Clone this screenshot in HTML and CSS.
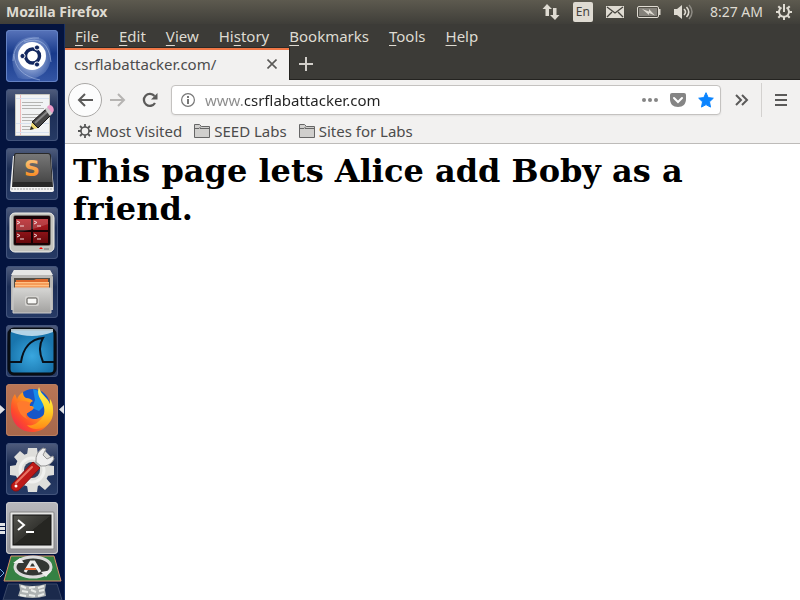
FILE: index.html
```html
<!DOCTYPE html>
<html lang="en">
<head>
<meta charset="utf-8">
<title>Mozilla Firefox</title>
<link rel="stylesheet" href="styles.css">
</head>
<body>
<header class="panel">
  <span class="panel-title">Mozilla Firefox</span>
  <div class="indicators">
    <button class="ind" aria-label="Network"><svg width="18" height="18" viewBox="0 0 18 18"><path d="M5 1l5 5H7v7H3.500V6H.5zM13 17l-5-5h3V5h3.500v7h3z"/></svg></button>
    <button class="ind lang">En</button>
    <button class="ind" aria-label="Messages"><svg width="18" height="12" viewBox="0 0 18 12"><rect width="18" height="12"/><path d="M1 1l8 6 8-6M1 11l5-5M17 11l-5-5" fill="none" stroke="#45433d" stroke-width="1.300"/></svg></button>
    <button class="ind" aria-label="Battery"><svg width="24" height="12" viewBox="0 0 24 12"><rect x=".5" y=".5" width="21" height="11" rx="1.500" fill="none" stroke="#dfdbd2"/><rect x="2" y="2" width="18" height="8" fill="#85827b"/><path d="M22 3h1.500v6H22z"/><path d="M5 3l7 2.500V3l6 6.500-6-2.500v2z"/></svg></button>
    <button class="ind" aria-label="Sound"><svg width="20" height="16" viewBox="0 0 20 16"><path d="M0 5h3l5-4v14l-5-4H0z"/><path d="M10 5q3 3 0 6M12.500 3q4.500 5 0 10" fill="none" stroke="#dfdbd2" stroke-width="1.600"/><path d="M15 1q6 7 0 14" fill="none" stroke="#8d8a83" stroke-width="1.500"/></svg></button>
    <button class="ind clock">8:27 AM</button>
    <button class="ind" aria-label="Session"><svg width="16" height="16" viewBox="0 0 16 16"><path d="M5.500 3.500a5 5 0 1 0 5 0" fill="none" stroke="#dfdbd2" stroke-width="2"/><path d="M8 0v8M2.300 2.300l2 2M13.700 2.300l-2 2M0 8h3M13 8h3M2.300 13.700l2-2M13.700 13.700l-2-2M8 13v3" stroke="#dfdbd2" stroke-width="2" fill="none"/></svg></button>
  </div>
</header>
<div class="desktop">
  <nav class="launcher" aria-label="Launcher">
    <button class="tile dash" aria-label="Search your computer"><svg viewBox="0 0 52 52">
      <defs><radialGradient id="sw" cx=".5" cy=".5" r=".6"><stop offset=".4" stop-color="#b6c7ea" stop-opacity=".75"/><stop offset="1" stop-color="#7895d0" stop-opacity=".15"/></radialGradient></defs>
      <path d="M8 40C2 20 12 5 30 7 43 9 48 23 43 36 39 46 26 52 12 48z" fill="url(#sw)"/>
      <path d="M7 31Q8 7 33 8M18 12Q42 4 45 32M8 24q1 21 26 26" fill="none" stroke="#a9bde5" stroke-opacity=".6"/>
      <circle cx="26" cy="26" r="14" fill="#fff"/>
      <circle cx="26.500" cy="26" r="7" fill="none" stroke="#12275f" stroke-width="3.400"/>
      <g fill="#12275f" stroke="#fff"><circle cx="16.500" cy="26" r="2.600"/><circle cx="31" cy="17.500" r="2.600"/><circle cx="31" cy="34.500" r="2.600"/></g>
    </svg></button>
    <button class="tile" aria-label="Text Editor"><svg viewBox="0 0 52 52">
      <path d="M9.500 5.500h34v41h-34z" fill="#f1f3f4" stroke="#c9c7be"/><path d="M14.500 6v40" stroke="#f1bcbc"/>
      <path d="M10 9.500h33M10 34.500h33M10 43.500h33" stroke="#d7e1ee"/>
      <path d="M16 13.500h21M16 16.500h19M16 19.500h22M16 25.500h20M16 28.500h17M16 31.500h12M16 37.500h8M16 40.500h8" stroke="#b4b4b2"/>
      <path d="M24 41l2-8 6 6z" fill="#ead66f"/><path d="M24 41l1-4 3 3z" fill="#222"/>
      <path d="M26 33l14-13 5 6-13 13z" fill="#454545" stroke="#171717"/><path d="M29 34l13-12" stroke="#858585" stroke-width="2"/>
      <path d="M39 20l3-2 5 6-3 3z" fill="#ccc"/><path d="M41 18q3-4 6 0 2 4-1 6z" fill="#ec9bc9"/>
    </svg></button>
    <button class="tile" aria-label="Sublime Text"><svg viewBox="0 0 52 52">
      <defs><linearGradient id="key" x2="0" y2="1"><stop stop-color="#777"/><stop offset="1" stop-color="#484848"/></linearGradient><linearGradient id="sg" x2="0" y2="1"><stop stop-color="#ffd08b"/><stop offset="1" stop-color="#f77c0b"/></linearGradient></defs>
      <path d="M7 8h38l3 34q0 2-3 2H7q-3 0-3-2z" fill="#f2f2f2"/><path d="M5 41h43" stroke="#a8a8a8" stroke-dasharray="2 1"/>
      <path d="M10 5h32q3 0 3 3l2 31H6L8 8q0-3 2-3z" fill="#292929"/><path d="M10 6h32q2 0 2 3l2 25H7L9 9q0-3 1-3z" fill="url(#key)"/>
      <text x="26" y="28" text-anchor="middle" class="sublime-s" fill="url(#sg)">S</text>
    </svg></button>
    <button class="tile" aria-label="Terminator"><svg viewBox="0 0 52 52">
      <defs><linearGradient id="red" x2="0" y2="1"><stop stop-color="#b91e24"/><stop offset="1" stop-color="#67090c"/></linearGradient></defs>
      <rect x="4" y="6" width="44" height="39" rx="5" fill="#c4c4be" stroke="#f1f1ec"/><rect x="7" y="8" width="38" height="31" rx="3" fill="#747470"/><rect x="8" y="9" width="36" height="29" rx="1" fill="#190306"/>
      <path d="M10 12h15v11H10zM27 12h15v11H27zM10 25h15v11H10zM27 25h15v11H27z" fill="url(#red)"/><path d="M10 12h32v5Q24 24 10 25z" fill="#fff" opacity=".16"/>
      <path d="M11 14l3 1.500-3 1.500M14 19h4M28 14l3 1.500-3 1.500M31 19h4M11 27l3 1.500-3 1.500M14 32h4M28 27l3 1.500-3 1.500M31 32h4" fill="none" stroke="#f3dada"/>
      <path d="M33 42l2-2 2 2z" fill="#f00"/><rect x="38" y="41" width="5" height="2" fill="#999"/>
    </svg></button>
    <button class="tile" aria-label="Files"><svg viewBox="0 0 52 52">
      <defs><linearGradient id="cab" x2="0" y2="1"><stop stop-color="#d6d6d4"/><stop offset="1" stop-color="#a2a19f"/></linearGradient></defs>
      <path d="M8 4h36l3 7v33H5V11z" fill="#b9b8b6"/><path d="M8 4h36l3 5H5z" fill="#e6e6e5"/><path d="M8 12h36v10H8z" fill="#524d45"/>
      <path d="M10 14h18l2-1h12v8H10z" fill="#df6a2c"/><path d="M9 16h34v6H9z" fill="#ffc185"/><path d="M9 18h34M9 21h34" stroke="#ec792e"/>
      <path d="M7 22h38v25H7z" fill="url(#cab)" stroke="#ccc"/><rect x="19" y="30" width="14" height="10" rx="2" fill="#d6d5d2"/><rect x="21" y="32" width="10" height="6" rx="1" fill="#f7f7f5" stroke="#53514d"/>
    </svg></button>
    <button class="tile" aria-label="Wireshark"><svg viewBox="0 0 52 52">
      <defs><radialGradient id="sea" cy=".6"><stop stop-color="#39a7df"/><stop offset="1" stop-color="#1975ad"/></radialGradient></defs>
      <rect x="3" y="4" width="46" height="45" rx="5" fill="url(#sea)" stroke="#080d13" stroke-width="3"/><path d="M5 4h42v3q-21 8-42 0z" fill="#dcecf5" opacity=".8"/>
      <path d="M4 37h11C17 24 24 14 37 13c-5 8-3 17 0 24h11" fill="none" stroke="#07101a" stroke-width="2"/>
    </svg></button>
    <button class="tile firefox" aria-label="Firefox"><svg viewBox="0 0 52 52">
      <defs><linearGradient id="fox" x1="1" x2="0" y2="1"><stop stop-color="#ffb11b"/><stop offset=".4" stop-color="#ff9a1c"/><stop offset=".7" stop-color="#ff4b2b"/><stop offset="1" stop-color="#e51b62"/></linearGradient><linearGradient id="tail" x2="0" y2="1"><stop stop-color="#fff15a"/><stop offset=".5" stop-color="#ffd928"/><stop offset="1" stop-color="#ff8a16"/></linearGradient></defs>
      <circle cx="27" cy="22" r="17" fill="#1656c8"/><path d="M27 5q12 2 14 14l-8 8-7-3 3-8z" fill="#168bea"/><path d="M16 14l9 5-3 4z" fill="#242477"/>
      <path d="M9 10l2 5c1-3 3-5 6-7 0 3 1 5 3 6 3 0 5 1 7 3-3 2-4 3-3 5 4 0 5 2 2 4l-5 3c-1 4 7 9 14 4 7-4 5-10 4-14 6 6 7 14 3 21-4 6-10 8-16 8C14 48 6 39 5 28c0-7 0-13 4-18z" fill="url(#fox)"/>
      <path d="M33 3c-3 8 2 12 4 17 3 7 1 14-5 18-3 3-8 4-11 3 3 4 9 5 15 3 8-3 12-10 11-19 0-4-1-7-3-10v5C42 13 35 12 33 3z" fill="url(#tail)"/>
      <path d="M11 19q5-4 14 0-3 2-1 4 4 0 2 3l-6 4q-1 3 3 6-11-4-12-17z" fill="#ff7a2d"/>
    </svg></button>
    <button class="tile" aria-label="System Settings"><svg viewBox="0 0 52 52">
      <g fill="#dededb"><circle cx="26" cy="27" r="17"/><path d="M22 5h9l1 7H21zM22 49h9l1-7H21zM4 23v9l7 1V22zM48 23v9l-7 1V22zM8 14l6-6 6 5-7 7zM39 47l6-6-5-6-7 7zM8 40l6 6 6-5-7-7zM45 14l-6-6-5 5 6 7z"/></g>
      <circle cx="26" cy="27" r="12" fill="none" stroke="#f0f0ee" stroke-width="3"/><circle cx="26" cy="27" r="8" fill="#34415f"/>
      <path d="M30 18l5 5-4 4-5-5z" fill="#aaa"/><path d="M30 19q-1-9 7-14l3 1-3 6 4 4 6-3 1 3q-4 8-13 7z" fill="#eee" stroke="#969696"/>
      <path d="M6 41L27 19l7 6-21 22c-4 3-10-1-7-6z" fill="#be1a18" stroke="#8a0e10"/><path d="M10 40l16-16" stroke="#e97364" stroke-width="2" stroke-linecap="round"/><circle cx="10" cy="43" r="1.500" fill="#fff"/>
    </svg></button>
    <button class="tile terminal" aria-label="Terminal"><svg viewBox="0 0 52 52">
      <defs><linearGradient id="scr" x2="1" y2="1"><stop stop-color="#565650"/><stop offset=".5" stop-color="#353531"/><stop offset=".51" stop-color="#262622"/></linearGradient></defs>
      <rect x="4" y="10" width="44" height="37" rx="1" fill="#e6e6e5" stroke="#858585"/><rect x="7" y="13" width="38" height="30" fill="url(#scr)" stroke="#111"/>
      <path d="M12 18l6 5-6 5" fill="none" stroke="#fff" stroke-width="2"/><path d="M20 30h8" stroke="#fff" stroke-width="2"/>
    </svg></button>
    <button class="folded" aria-label="Software Updater and Trash"><svg viewBox="0 0 65 46">
      <path d="M8 30h49l5 16H3z" fill="#1b2a4c" stroke="#3b4968"/><path d="M19 30q13 4 27 0l-1 6 1 6q-13 4-28 0l2-6z" fill="#aeb2b2"/><path d="M21 32l5 2M29 34l6-1M38 34l6-2M22 37l6 1M31 36l5 2M39 37l5-1M20 41l6 1M29 41l6 1M38 42l6-2" stroke="#e9ebe9" stroke-width="2" fill="none"/>
      <path d="M11 2h43l7 25H4z" fill="#348143" stroke="#d98f68"/>
      <ellipse cx="33" cy="13" rx="18" ry="10" fill="#333734" stroke="#dadada" stroke-width="3"/><path d="M13 9l7-5 4 5zM52 16l-6 7-5-5z" fill="#eee"/>
      <path d="M25 18l6-10h3l6 10M27 14h11" fill="none" stroke="#eee" stroke-width="3"/><path d="M25 15h11" stroke="#f06c35" stroke-width="2"/>
      <path d="M0 15l4 4-4 4" fill="none" stroke="#72aee2"/>
    </svg></button>
  </nav>
  <section class="browser">
    <div class="menubar">
      <button><u>F</u>ile</button><button><u>E</u>dit</button><button><u>V</u>iew</button><button>Hi<u>s</u>tory</button><button><u>B</u>ookmarks</button><button><u>T</u>ools</button><button><u>H</u>elp</button>
    </div>
    <div class="tabs">
      <div class="tab"><span>csrflabattacker.com/</span><button aria-label="Close tab"><svg width="10" height="10" viewBox="0 0 10 10"><path d="M.5.5l9 9M9.500.5l-9 9" stroke="#5b5a58" stroke-width="1.600"/></svg></button></div>
      <button class="newtab" aria-label="New tab"><svg width="14" height="14" viewBox="0 0 14 14"><path d="M7 0v14M0 7h14" stroke="#d2cfca" stroke-width="2"/></svg></button>
    </div>
    <div class="toolbar">
      <button class="back" aria-label="Back"><svg width="16" height="14" viewBox="0 0 16 14"><path d="M16 7H2M8 1L2 7l6 6" fill="none" stroke="#5b5a59" stroke-width="2"/></svg></button>
      <button class="tool" aria-label="Forward"><svg width="16" height="14" viewBox="0 0 16 14"><path d="M0 7h14M8 1l6 6-6 6" fill="none" stroke="#b6b4b2" stroke-width="2"/></svg></button>
      <button class="tool" aria-label="Reload"><svg width="16" height="16" viewBox="0 0 16 16"><path d="M12.500 4A6 6 0 1 0 13 11" fill="none" stroke="#5b5a59" stroke-width="2.300"/><path d="M15.500 1v6.500H9z" fill="#5b5a59"/></svg></button>
      <div class="urlbar">
        <button aria-label="Site information"><svg width="14" height="14" viewBox="0 0 14 14"><circle cx="7" cy="7" r="6.400" fill="none" stroke="#777" stroke-width="1.200"/><path d="M7 6v5M7 3v2" stroke="#777" stroke-width="2"/></svg></button>
        <input type="text" value="www.csrflabattacker.com" aria-label="Address" spellcheck="false">
        <button aria-label="Page actions"><svg width="16" height="16" viewBox="0 0 16 16" fill="#858585"><circle cx="2" cy="8" r="2"/><circle cx="8" cy="8" r="2"/><circle cx="14" cy="8" r="2"/></svg></button>
        <button aria-label="Save to Pocket"><svg width="16" height="16" viewBox="0 0 16 16"><path d="M2 1h12q2 0 2 2v4c0 5-3 8-8 8S0 12 0 7V3q0-2 2-2z" fill="#858585"/><path d="M4 6l4 4 4-4" fill="none" stroke="#fff" stroke-width="2" stroke-linecap="round"/></svg></button>
        <button aria-label="Edit this bookmark"><svg width="16" height="16" viewBox="0 0 16 16"><path d="M8 .7l2.200 4.900 5.100.6-3.800 3.600 1 5.300L8 12.600l-4.500 2.500 1-5.300L.7 6.200l5.100-.6z" fill="#0a84ff" stroke="#0a84ff" stroke-linejoin="round"/></svg></button>
      </div>
      <button class="more" aria-label="More tools"><svg width="14" height="12" viewBox="0 0 14 12"><path d="M1 1l5 5-5 5M7 1l5 5-5 5" fill="none" stroke="#5b5a59" stroke-width="2"/></svg></button>
      <button class="burger" aria-label="Open menu"><svg width="12" height="12" viewBox="0 0 12 12"><path d="M0 1h12M0 6h12M0 11h12" stroke="#5b5a59" stroke-width="2"/></svg></button>
    </div>
    <div class="bookmarks">
      <button><svg width="14" height="14" viewBox="0 0 14 14"><circle cx="7" cy="7" r="4" fill="none" stroke="#555" stroke-width="1.600"/><path d="M7 0v3M7 11v3M0 7h3M11 7h3M2 2l2 2M10 10l2 2M12 2l-2 2M4 10l-2 2" stroke="#555" stroke-width="1.800"/></svg>Most Visited</button>
      <button><svg width="16" height="14" viewBox="0 0 16 14"><path d="M.5 13.500V.5h5l2 2h8v11z" fill="#d0cfcd" stroke="#666"/><path d="M1 4.500h4l2-2" fill="none" stroke="#666"/><path d="M6 4.500h9" stroke="#666"/></svg>SEED Labs</button>
      <button><svg width="16" height="14" viewBox="0 0 16 14"><path d="M.5 13.500V.5h5l2 2h8v11z" fill="#d0cfcd" stroke="#666"/><path d="M1 4.500h4l2-2" fill="none" stroke="#666"/><path d="M6 4.500h9" stroke="#666"/></svg>Sites for Labs</button>
    </div>
    <main><h1>This page lets Alice add Boby as a friend.</h1></main>
  </section>
</div>
</body>
</html>
```
FILE: styles.css
```css
* { box-sizing: border-box; }
body {
  margin: 0;
  height: 100vh;
  display: flex;
  flex-direction: column;
  overflow: hidden;
  font: 15px/20px "Noto Sans", "Open Sans", sans-serif;
}
button {
  display: flex;
  align-items: center;
  padding: 0;
  border: 0;
  background: none;
  color: inherit;
  font: inherit;
  white-space: nowrap;
}
svg { display: block; flex: none; }

.panel {
  flex: none;
  height: 24px;
  padding: 0 8px 0 6px;
  display: flex;
  align-items: center;
  justify-content: space-between;
  background: linear-gradient(#5d5a4f, #3f3e39);
  color: #dfdbd2;
  fill: #dfdbd2;
}
.panel-title { font-size: 14px; font-weight: 700; }
.indicators { display: flex; align-items: center; gap: 13px; }
.clock { margin-left: 3px; font-size: 14px; }
.lang {
  height: 20px;
  padding: 0 3px;
  border-radius: 2px;
  background: #dfdbd2;
  color: #45433d;
  font-size: 12px;
}

.desktop { flex: 1; min-height: 0; display: flex; }
.launcher {
  position: relative;
  flex: none;
  width: 65px;
  padding: 6px 6px 0;
  display: flex;
  flex-direction: column;
  gap: 7px;
  overflow: hidden;
  background: #04143f;
  border-right: 1px solid #173065;
}
.tile {
  position: relative;
  flex: none;
  width: 52px;
  height: 52px;
  border-radius: 4px;
  background: linear-gradient(#505d7d, #1c2d55 40%, #263a65);
  box-shadow: inset 0 0 0 1px #43547b;
}
.tile svg { width: 52px; height: 52px; }
.dash { background: linear-gradient(#5874ba, #183a8b 45%, #3456a5); box-shadow: inset 0 0 0 1px #6482c4; }
.firefox { background: linear-gradient(#ba7656, #a7674b); box-shadow: inset 0 0 0 1px #b87d60; }
.terminal { background: linear-gradient(#b9b9bd, #929298); box-shadow: inset 0 0 0 1px #c9c9cc; }
.firefox::before, .firefox::after, .terminal::before {
  content: "";
  position: absolute;
  top: 21px;
  width: 5px;
  height: 9px;
  background: #e0e2e6;
}
.firefox::before { left: -6px; clip-path: polygon(0 0, 100% 50%, 0 100%); }
.firefox::after { right: -6px; clip-path: polygon(100% 0, 0 50%, 100% 100%); }
.terminal::before {
  left: -6px;
  height: 11px;
  background: repeating-linear-gradient(#e0e2e6 0 3px, #04143f 3px 4px);
}
.folded { flex: none; margin: -7px -6px 0; }
.folded svg { width: 65px; height: 46px; }
.sublime-s { font: 700 22px "DejaVu Sans", sans-serif; }

.browser {
  flex: 1;
  min-width: 0;
  display: flex;
  flex-direction: column;
  background: #f2f1f0;
  color: #4c4c4c;
}
.menubar {
  height: 23px;
  padding: 0 10px;
  display: flex;
  gap: 20px;
  background: #3c3b37;
  color: #dfdbd2;
}
.menubar button { display: block; }
.menubar u { text-underline-offset: 3px; }
.tabs {
  height: 33px;
  display: flex;
  background: #3c3b37;
  box-shadow: inset 0 -1px #242320;
}
.tab {
  width: 225px;
  padding: 0 12px 0 9px;
  display: flex;
  align-items: center;
  justify-content: space-between;
  border-top: 1px solid #2b2926;
  border-right: 1px solid #242320;
  background: linear-gradient(#f07746 0 2px, #f2f1f0 2px);
}
.newtab { padding: 0 9px; }
.toolbar {
  height: 40px;
  padding: 0 0 0 3px;
  display: flex;
  align-items: center;
}
.back {
  width: 34px;
  height: 34px;
  justify-content: center;
  border: 1px solid #aaa8a6;
  border-radius: 50%;
  background: #fcfcfc;
}
.tool { width: 32px; height: 32px; justify-content: center; }
.urlbar {
  flex: 1;
  min-width: 0;
  height: 30px;
  margin-left: 5px;
  padding: 0 6px 0 9px;
  display: flex;
  align-items: center;
  gap: 12px;
  border: 1px solid #c4c2c0;
  border-radius: 4px;
  background: #fff;
  box-shadow: 0 1px 2px #0001;
}
.urlbar input {
  flex: 1;
  min-width: 0;
  height: 24px;
  margin-left: -2px;
  padding: 0;
  border: 0;
  outline: 0;
  background: linear-gradient(90deg, #8b8b8b 40px, #222 40px);
  background-clip: text;
  color: transparent;
  font: inherit;
}
.more { width: 40px; height: 34px; justify-content: center; }
.more svg { margin-left: 2px; }
.burger { width: 39px; height: 34px; justify-content: center; border-left: 1px solid #d3d1cf; }
.bookmarks {
  height: 24px;
  padding: 0 13px 2px;
  display: flex;
  align-items: center;
  gap: 12px;
  border-bottom: 1px solid #bdbbb9;
}
.bookmarks button { gap: 4px; }
main { flex: 1; min-height: 0; padding: 8px; background: #fff; color: #000; }
h1 { margin: 0; font: 700 32px/38px "DejaVu Serif", serif; }
```
